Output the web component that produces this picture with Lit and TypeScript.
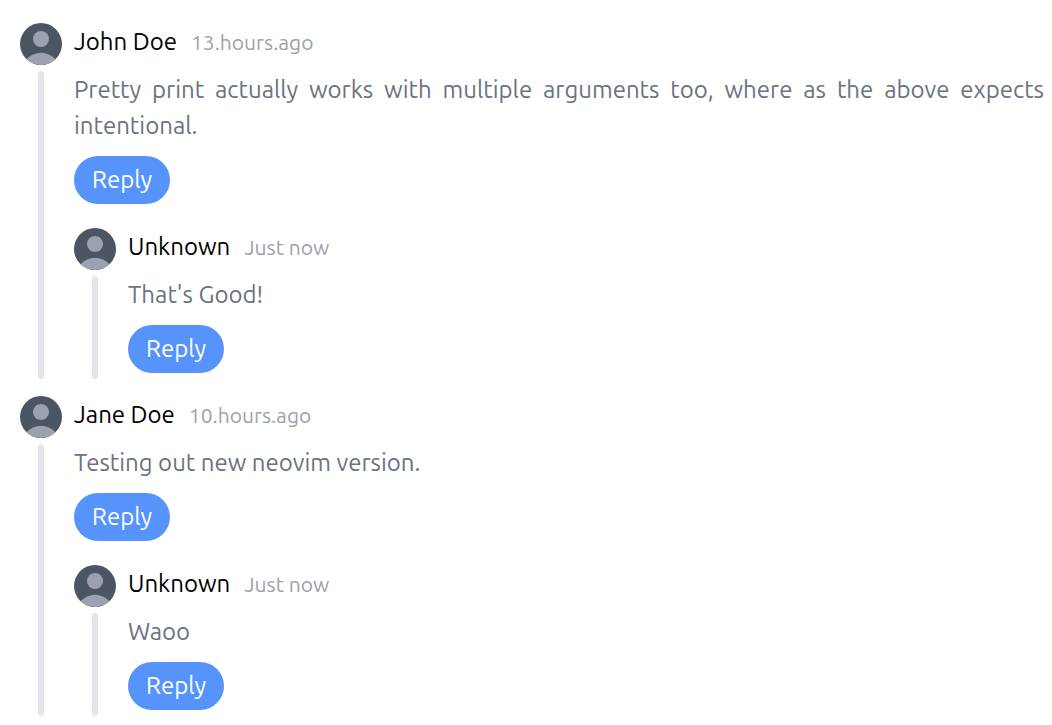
import { LitElement, html, css, nothing, type TemplateResult } from "lit";
import { customElement, property } from "lit/decorators.js";

interface Comment {
  author: string;
  time: string;
  text: string;
  replies?: Comment[];
}

const comments: Comment[] = [
  {
    author: "John Doe",
    time: "13.hours.ago",
    text: "Pretty print actually works with multiple arguments too, where as the above expects intentional.",
    replies: [{ author: "Unknown", time: "Just now", text: "That's Good!" }],
  },
  {
    author: "Jane Doe",
    time: "10.hours.ago",
    text: "Testing out new neovim version.",
    replies: [{ author: "Unknown", time: "Just now", text: "Waoo" }],
  },
];

@customElement("user-comment")
export class UserComment extends LitElement {
  @property({ attribute: false }) comment!: Comment;

  static styles = css`
    :host {
      display: block;
    }
    .comment {
      display: grid;
      grid-template-columns: 42px minmax(0, 1fr);
      column-gap: 12px;
    }
    .rail {
      display: flex;
      flex-direction: column;
      align-items: center;
      gap: 6px;
    }
    .avatar {
      display: block;
      width: 42px;
      height: 42px;
      flex: none;
    }
    .line {
      flex: 1;
      width: 6px;
      border-radius: 3px;
      background: #e4e5eb;
    }
    .content {
      padding-bottom: 6px;
    }
    .content.has-replies {
      padding-bottom: 0;
    }
    .header {
      display: flex;
      align-items: baseline;
      gap: 14px;
      height: 37px;
      line-height: 38px;
    }
    .author {
      margin: 0;
      font-size: 24px;
      font-weight: 400;
      color: #000;
    }
    .time {
      font-size: 21px;
      color: #9ca1af;
    }
    .text {
      margin: 12px 0;
      line-height: 36px;
      color: #6b7280;
      text-align: justify;
    }
    .reply {
      display: block;
      height: 48px;
      padding: 0 18px;
      border: 0;
      border-radius: 24px;
      background: #5694fc;
      color: #fff;
      font: inherit;
      line-height: 36px;
      cursor: pointer;
    }
    .replies {
      display: grid;
      gap: 18px;
      margin-top: 24px;
    }
  `;

  render(): TemplateResult {
    const { author, time, text, replies } = this.comment;
    return html`
      <article class="comment">
        <div class="rail">
          <svg class="avatar" viewBox="0 0 42 42" aria-hidden="true">
            <circle cx="21" cy="21" r="21" fill="#4b5563" />
            <circle cx="21" cy="16" r="8" fill="#9ca1af" />
            <path d="M6.5 36.2C10.5 32 15.5 29.8 21 29.8S31.5 32 35.5 36.2A21 21 0 0 1 6.5 36.2Z" fill="#9ca1af" />
          </svg>
          <div class="line"></div>
        </div>
        <div class="content ${replies ? "has-replies" : ""}">
          <header class="header">
            <h2 class="author">${author}</h2>
            <time class="time">${time}</time>
          </header>
          <p class="text">${text}</p>
          <button class="reply" type="button">Reply</button>
          ${replies
            ? html`<div class="replies">
                ${replies.map((r) => html`<user-comment .comment=${r}></user-comment>`)}
              </div>`
            : nothing}
        </div>
      </article>
    `;
  }
}

@customElement("app-root")
export class AppRoot extends LitElement {
  static styles = css`
    :host {
      display: block;
      background: #fff;
      font-family: Ubuntu, "Noto Sans", sans-serif;
      font-size: 24px;
    }
    .thread {
      display: grid;
      gap: 17px;
      padding: 23px 8px 8px 20px;
    }
  `;

  render(): TemplateResult {
    return html`
      <main class="thread">
        ${comments.map((c) => html`<user-comment .comment=${c}></user-comment>`)}
      </main>
    `;
  }
}
